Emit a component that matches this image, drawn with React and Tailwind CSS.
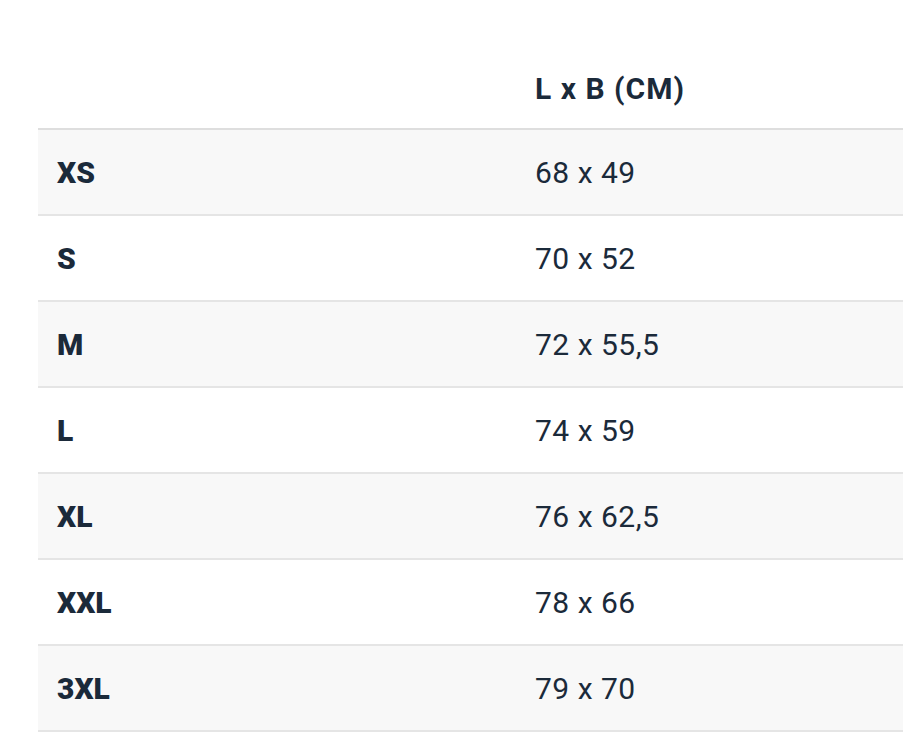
import React from "react";

const rows = [
  ["XS", "68 x 49"],
  ["S", "70 x 52"],
  ["M", "72 x 55,5"],
  ["L", "74 x 59"],
  ["XL", "76 x 62,5"],
  ["XXL", "78 x 66"],
  ["3XL", "79 x 70"],
];

export default function App() {
  return (
    <div className="min-h-[752px] w-[903px] overflow-hidden bg-white pl-[38px] pt-[48px] font-['Roboto',sans-serif] text-[#1b2a3a]">
      <div className="w-[880px]">
        <div className="flex h-[82px] items-center border-b-2 border-[#dedede]">
          <div className="w-[478px]" />
          <div className="pl-[19px] text-[30px] font-bold tracking-[1px]">L x B (CM)</div>
        </div>
        {rows.map(([size, dim], i) => (
          <div
            key={size}
            className={`flex h-[86px] items-center border-b-2 border-[#e5e5e5] ${i % 2 === 0 ? "bg-[#f8f8f8]" : "bg-white"}`}
          >
            <div className="w-[478px] pl-[19px] text-[30px] font-black">{size}</div>
            <div className="pl-[19px] text-[30px] font-normal tracking-[0.5px]">{dim}</div>
          </div>
        ))}
      </div>
    </div>
  );
}
